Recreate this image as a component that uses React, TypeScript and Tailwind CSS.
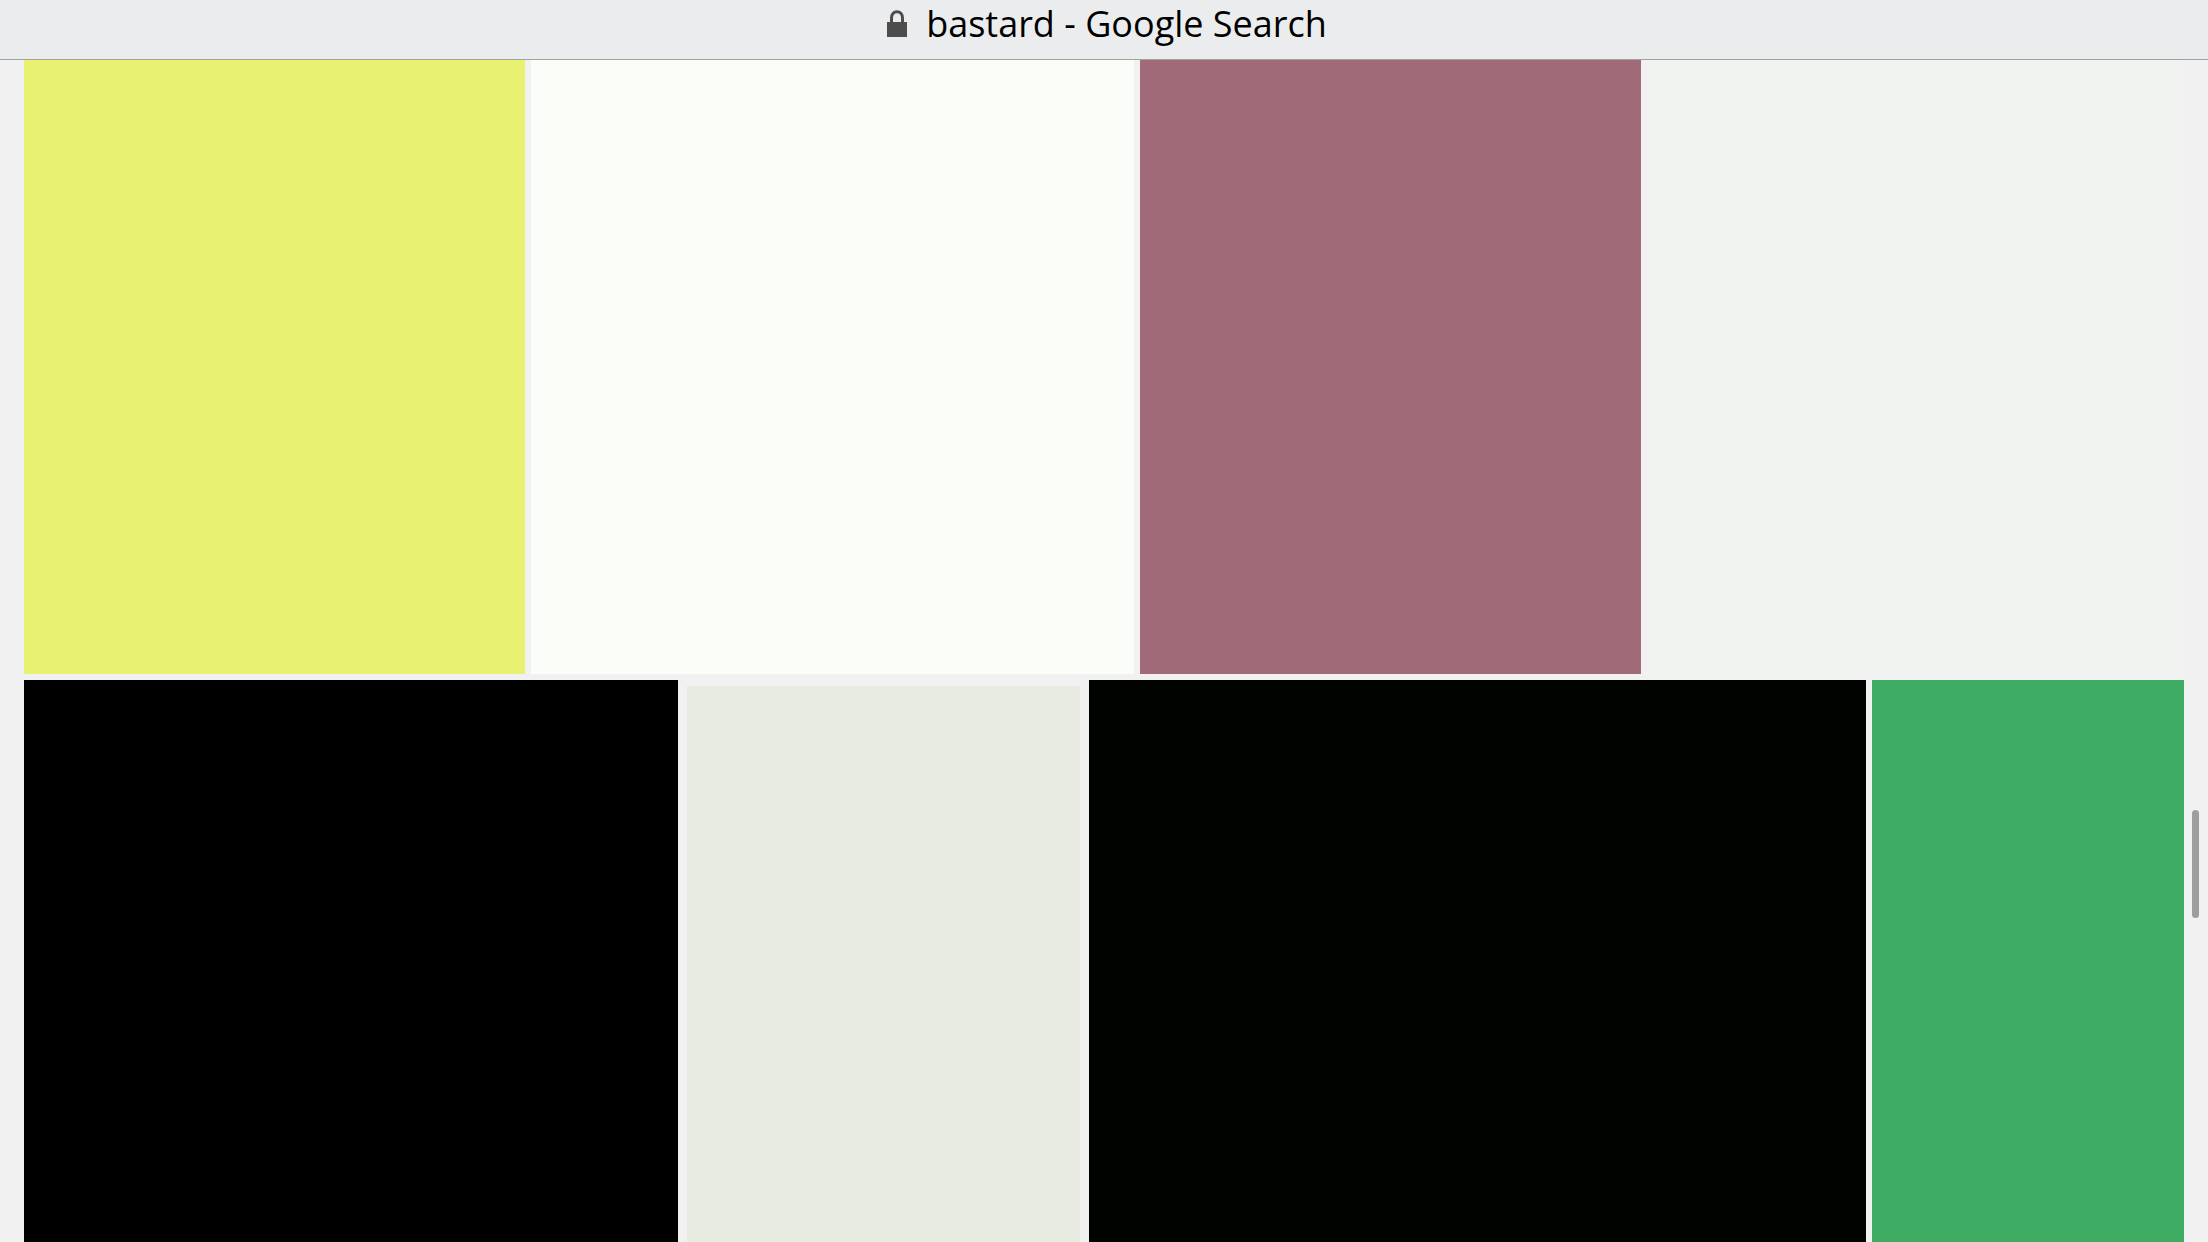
interface Tile {
  label: string;
  color: string;
  inset?: boolean;
}

const topRow: Tile[] = [
  { label: "Result 1", color: "bg-[#e9f170]" },
  { label: "Result 2", color: "bg-[#fafdf8]" },
  { label: "Result 3", color: "bg-[#a06a79]" },
  { label: "Result 4", color: "bg-[#f1f3f0]" },
];

const bottomRow: Tile[] = [
  { label: "Result 5", color: "bg-black" },
  { label: "Result 6", color: "bg-[#e8ebe1]", inset: true },
  { label: "Result 7", color: "bg-[#010300]" },
  { label: "Result 8", color: "bg-[#3dab62]" },
];

function ResultTile({ tile }: { tile: Tile }) {
  return (
    <a
      href="#"
      aria-label={tile.label}
      className={tile.inset ? "flex px-[3px] pt-1.5" : "flex"}
    >
      <div className={`flex-1 ${tile.color}`}></div>
    </a>
  );
}

function LockIcon() {
  return (
    <svg
      className="h-[27px] w-5 shrink-0"
      viewBox="0 0 20 27"
      fill="none"
      aria-hidden="true"
    >
      <path
        d="M4.5 13V8C4.5 4.2 6.6 1.8 10 1.8S15.5 4.2 15.5 8v5"
        stroke="#4d4d4d"
        strokeWidth="3"
      />
      <rect y="12" width="20" height="15" fill="#4d4d4d" />
    </svg>
  );
}

export default function App() {
  return (
    <div className="relative flex h-screen flex-col overflow-hidden bg-[#f1f1f1] font-['Open_Sans',sans-serif]">
      {/* Title bar */}
      <header className="flex h-[60px] shrink-0 items-center justify-center gap-[19px] border-b border-[#a0a0a5] bg-[#ebecee] pb-3 pl-1.5">
        <LockIcon />
        <h1 className="text-4xl leading-[48px] text-black">
          bastard - Google Search
        </h1>
      </header>

      {/* Image results */}
      <main className="flex flex-1 flex-col gap-1.5 px-6">
        <div className="grid h-[614px] shrink-0 grid-cols-[501fr_603fr_501fr_537fr] gap-1.5">
          {topRow.map((tile) => (
            <ResultTile key={tile.label} tile={tile} />
          ))}
        </div>
        <div className="grid flex-1 grid-cols-[654fr_399fr_777fr_312fr] gap-1.5">
          {bottomRow.map((tile) => (
            <ResultTile key={tile.label} tile={tile} />
          ))}
        </div>
      </main>

      {/* Scroll indicator */}
      <div className="absolute top-[810px] right-[9px] h-[108px] w-[7px] rounded-full bg-[#9e9e9e]"></div>
    </div>
  );
}
